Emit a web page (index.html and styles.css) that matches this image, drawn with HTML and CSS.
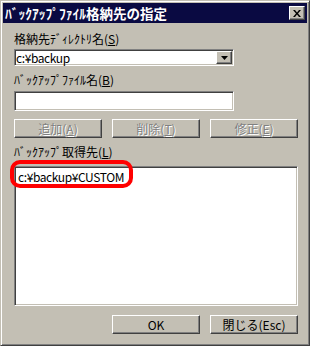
FILE: index.html
```html
<!DOCTYPE html>
<html lang="ja">
  <head>
    <meta charset="UTF-8" />
    <meta name="viewport" content="width=device-width, initial-scale=1.0" />
    <title>ﾊﾞｯｸｱｯﾌﾟﾌｧｲﾙ格納先の指定</title>
    <link rel="stylesheet" href="styles.css">
  </head>
  <body>
    <div class="dialog">
      <div class="titlebar">
        <span class="title">ﾊﾞｯｸｱｯﾌﾟﾌｧｲﾙ格納先の指定</span>
        <button class="close-button">
          <svg width="8" height="7" viewBox="0 0 8 7">
            <path d="M0 0h2l2 2.5L6 0h2L5 3.5 8 7H6L4 4.5 2 7H0l3-3.5z" fill="#000" />
          </svg>
        </button>
      </div>
      <div class="content">
        <div class="field-label">格納先ﾃﾞｨﾚｸﾄﾘ名(<u>S</u>)</div>
        <div class="combo">
          <span class="combo-value">c:¥backup</span>
          <span class="combo-arrow">
            <svg width="7" height="4" viewBox="0 0 7 4">
              <path d="M0 0h7L3.5 4z" fill="#000" />
            </svg>
          </span>
        </div>

        <div class="field-label">ﾊﾞｯｸｱｯﾌﾟﾌｧｲﾙ名(<u>B</u>)</div>
        <div class="textbox"></div>

        <div class="button-row">
          <button class="btn" disabled>追加(<u>A</u>)</button>
          <button class="btn" disabled>削除(<u>T</u>)</button>
          <button class="btn" disabled>修正(<u>E</u>)</button>
        </div>

        <div class="field-label">ﾊﾞｯｸｱｯﾌﾟ取得先(<u>L</u>)</div>
        <div class="listbox">
          <div class="list-item">c:¥backup¥CUSTOM</div>
          <span class="highlight"></span>
        </div>

        <div class="footer">
          <button class="btn">OK</button>
          <button class="btn">閉じる(Esc)</button>
        </div>
      </div>
    </div>
  </body>
</html>
```

FILE: styles.css
```css
* {
  box-sizing: border-box;
  font-family: "Noto Sans CJK JP", "Noto Sans", sans-serif;
}
body {
  margin: 0;
  background-color: #fff;
}
.dialog {
  width: 310px;
  height: 346px;
  padding: 2px;
  background-color: #c3bfb4;
  border: 1px solid;
  border-color: #c3bfb4 #404040 #404040 #c3bfb4;
  box-shadow: inset 1px 1px #fff, inset -1px -1px #808080;
}
.titlebar {
  display: flex;
  align-items: center;
  justify-content: space-between;
  height: 20px;
  padding: 0 2px 0 2px;
  background-color: #0a0a42;
}
.title {
  color: #fff;
  font-size: 13.5px;
  font-weight: bold;
  line-height: 20px;
}
.close-button {
  display: flex;
  justify-content: center;
  align-items: center;
  width: 16px;
  height: 14px;
  padding: 0;
  background-color: #c3bfb4;
  border: 1px solid;
  border-color: #fff #404040 #404040 #fff;
  box-shadow: inset -1px -1px #808080;
}
.content {
  padding: 0 0 0 11px;
}
.field-label {
  height: 14px;
  margin-top: 7px;
  font-size: 12px;
  line-height: 14px;
  color: #000;
}
.content > .field-label:first-child {
  margin-top: 9px;
}
.field-label u {
  text-underline-offset: 1px;
}
.combo {
  display: flex;
  align-items: center;
  justify-content: space-between;
  width: 220px;
  height: 17px;
  margin-top: 3px;
  background-color: #fff;
  border: 1px solid;
  border-color: #808080 #fff #fff #808080;
  box-shadow: inset 1px 1px #404040, inset -1px -1px #c3bfb4;
}
.combo-value {
  padding-left: 1px;
  font-size: 12px;
  line-height: 13px;
  letter-spacing: -0.4px;
}
.combo-arrow {
  display: flex;
  justify-content: center;
  align-items: center;
  width: 16px;
  height: 13px;
  margin-right: 1px;
  background-color: #c3bfb4;
  border: 1px solid;
  border-color: #fff #404040 #404040 #fff;
  box-shadow: inset -1px -1px #808080;
}
.textbox {
  width: 220px;
  height: 20px;
  margin-top: 4px;
  background-color: #fff;
  border: 1px solid;
  border-color: #808080 #fff #fff #808080;
  box-shadow: inset 1px 1px #404040, inset -1px -1px #c3bfb4;
}
.button-row {
  display: flex;
  gap: 10px;
  margin-top: 8px;
}
.btn {
  width: 88px;
  height: 19px;
  padding: 0;
  font-size: 12px;
  line-height: 15px;
  color: #000;
  background-color: #c3bfb4;
  border: 1px solid;
  border-color: #fff #404040 #404040 #fff;
  box-shadow: inset -1px -1px #808080;
}
.btn:disabled {
  color: #808080;
  text-shadow: 1px 1px #fff;
}
.listbox {
  position: relative;
  width: 284px;
  height: 140px;
  margin-top: 7px;
  padding: 3px 3px;
  background-color: #fff;
  border: 1px solid;
  border-color: #808080 #fff #fff #808080;
  box-shadow: inset 1px 1px #404040, inset -1px -1px #c3bfb4;
}
.list-item {
  font-size: 12px;
  line-height: 13px;
  letter-spacing: -0.4px;
}
.highlight {
  position: absolute;
  left: -5px;
  top: -7px;
  width: 123px;
  height: 28px;
  border: 4px solid #ff0000;
  border-radius: 10px;
}
.footer {
  display: flex;
  justify-content: flex-end;
  gap: 10px;
  width: 284px;
  margin-top: 9px;
}
```
